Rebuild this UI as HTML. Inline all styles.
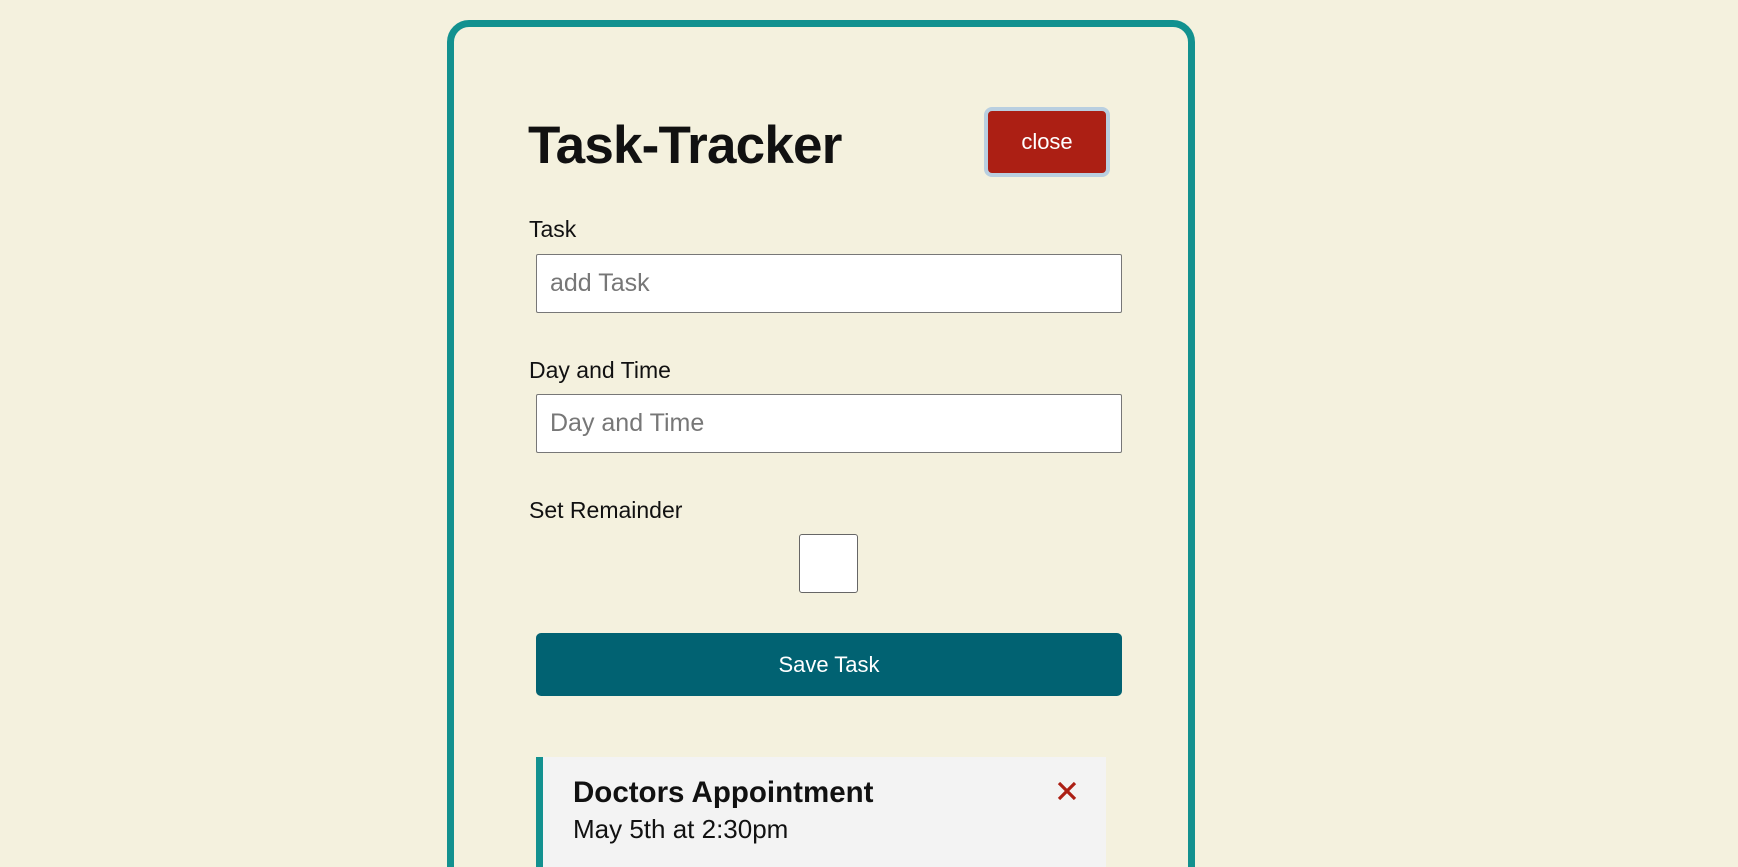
<!DOCTYPE html>
<html><head><meta charset="utf-8"><style>
html,body{margin:0;padding:0;width:1738px;height:867px;overflow:hidden;background:#f4f1de;font-family:"Liberation Sans",sans-serif;}
.wrap{position:relative;width:1738px;height:867px;overflow:hidden;}
.card{position:absolute;left:447px;top:20px;width:748px;height:900px;box-sizing:border-box;border:7px solid #12918f;border-radius:22px;}
.abs{position:absolute;line-height:1;}
h1{position:absolute;left:528px;top:119px;margin:0;font-size:53px;font-weight:bold;color:#111;line-height:1;letter-spacing:-0.8px;}
.close{left:984px;top:107px;width:126px;height:70px;box-sizing:border-box;border:4px solid #b9cfe0;border-radius:8px;background:#ac1f14;color:#fff;font-size:22px;text-align:center;line-height:62px;}
.lbl{font-size:23px;color:#111;left:529px;}
.inp{left:536px;width:586px;height:59px;box-sizing:border-box;border:1px solid #777;border-radius:2px;background:#fff;font-size:25px;color:#777;padding-left:13px;line-height:57px;}
.cb{left:799px;top:534px;width:59px;height:59px;box-sizing:border-box;border:1px solid #666;border-radius:3px;background:#fff;}
.save{left:536px;top:633px;width:586px;height:63px;background:#016272;border-radius:5px;color:#fff;font-size:22px;text-align:center;line-height:63px;}
.task{left:536px;top:757px;width:570px;height:120px;background:#f3f3f3;border-left:7px solid #12918f;box-sizing:border-box;}
</style></head><body><div class="wrap">
<div class="card"></div>
<h1>Task-Tracker</h1>
<div class="abs close">close</div>
<div class="abs lbl" style="top:218px">Task</div>
<div class="abs inp" style="top:254px">add Task</div>
<div class="abs lbl" style="top:359px">Day and Time</div>
<div class="abs inp" style="top:394px">Day and Time</div>
<div class="abs lbl" style="top:499px">Set Remainder</div>
<div class="abs cb"></div>
<div class="abs save">Save Task</div>
<div class="abs task"></div>
<div class="abs" style="left:573px;top:778px;font-size:29.5px;font-weight:bold;color:#111">Doctors Appointment</div>
<div class="abs" style="left:573px;top:816px;font-size:26px;color:#111">May 5th at 2:30pm</div>
<svg class="abs" style="left:1057px;top:782px" width="20" height="18" viewBox="0 0 20 18"><path d="M2 1L18 17M18 1L2 17" stroke="#ac1f14" stroke-width="3.2"/></svg>
</div></body></html>
